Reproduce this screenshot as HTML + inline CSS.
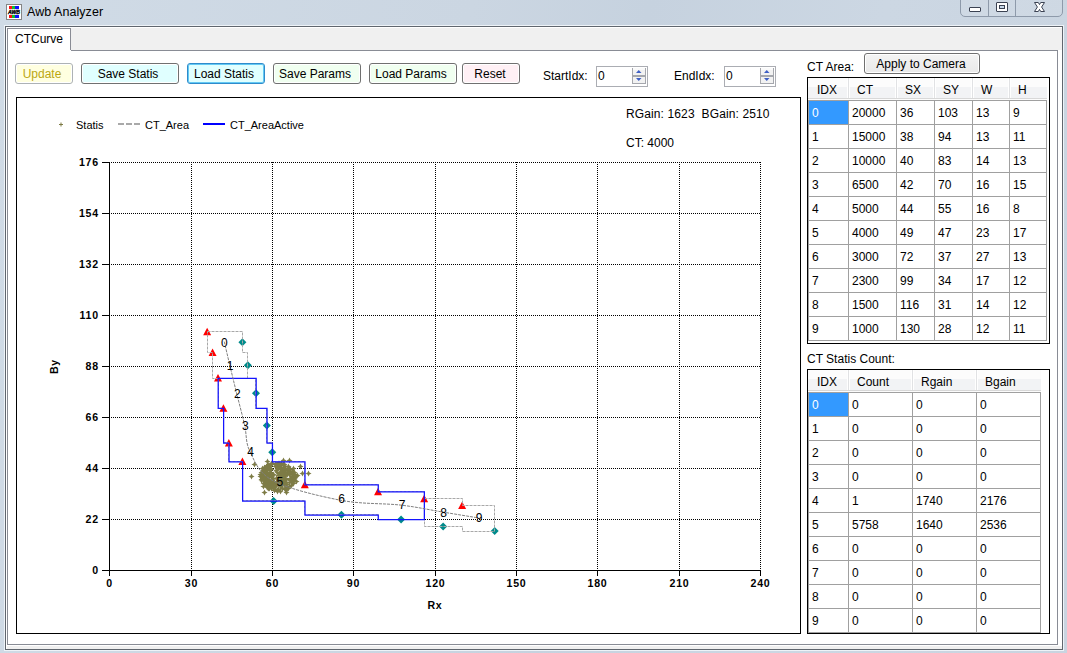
<!DOCTYPE html>
<html><head><meta charset="utf-8">
<style>
*{margin:0;padding:0;box-sizing:border-box}
html,body{width:1067px;height:653px;overflow:hidden}
body{position:relative;background:linear-gradient(100deg,#d0dbe6 0%,#cbd6e2 40%,#c6d2df 55%,#ccd7e3 75%,#c9d4e0 100%);font-family:"Liberation Sans",sans-serif;font-size:12px;color:#000}
.a{position:absolute}
.t{position:absolute;white-space:pre;line-height:14px}
.btn{position:absolute;height:21px;border:1px solid #707070;border-radius:3px;box-shadow:inset 0 0 0 1px #fff}
.btn span{position:absolute;left:0;right:0;top:3px;text-align:center;white-space:pre;line-height:14px}
.spin{position:absolute;width:52px;height:21px;border:1px solid #abadb3;background:#fff}
.grid{position:absolute;border:1px solid #000;background:#fff;overflow:hidden}
</style></head><body>
<!-- title -->
<svg class="a" style="left:6px;top:4px" width="16" height="16" viewBox="0 0 16 16" shape-rendering="crispEdges"><rect x="0.5" y="0.5" width="15" height="15" fill="#fff" stroke="#858585"/><rect x="3" y="2" width="3" height="3" fill="#ff1010"/><rect x="6" y="2" width="3" height="3" fill="#10c030"/><rect x="9" y="2" width="4" height="3" fill="#1010ff"/><rect x="3" y="11" width="3" height="3" fill="#ff1010"/><rect x="6" y="11" width="3" height="3" fill="#10c030"/><rect x="9" y="11" width="4" height="3" fill="#1010ff"/><text x="8" y="10" text-anchor="middle" font-family="Liberation Sans" font-weight="bold" font-style="italic" font-size="5.5" fill="#000" stroke="#000" stroke-width="0.35" shape-rendering="auto" textLength="12" lengthAdjust="spacingAndGlyphs">AWB</text></svg>
<div class="t" style="left:27px;top:5px;font-size:12.5px;line-height:15px;color:#000;letter-spacing:0.05px">Awb Analyzer</div>
<!-- caption buttons -->
<div class="a" style="left:960px;top:-3px;width:103px;height:20px;border:1px solid #8e9aaa;border-radius:0 0 5px 5px;background:rgba(255,255,255,0.08)"></div>
<div class="a" style="left:988px;top:0;width:1px;height:16px;background:#8e9aaa"></div>
<div class="a" style="left:1015px;top:0;width:1px;height:16px;background:#8e9aaa"></div>
<div class="a" style="left:969px;top:7px;width:12px;height:5px;border:1px solid #3b4252;background:#fff;border-radius:1px"></div>
<div class="a" style="left:996px;top:2px;width:12px;height:10px;border:1px solid #3b4252;background:#fff;border-radius:1px"><div class="a" style="left:2px;top:2px;width:6px;height:4px;border:1px solid #3b4252;background:#c9d9ea"></div></div>
<svg class="a" style="left:1032px;top:0" width="15" height="14" viewBox="0 0 15 14"><path d="M2.5 2.5H6.3L7.5 4.6L8.7 2.5H12.5L9.6 7L12.5 11.5H8.7L7.5 9.4L6.3 11.5H2.5L5.4 7Z" fill="#fff" stroke="#3b4252" stroke-width="1" stroke-linejoin="round"/></svg>

<!-- client area -->
<div class="a" style="left:4px;top:25px;width:1060px;height:626px;border:1px solid #eef3f8"></div>
<div class="a" style="left:5px;top:26px;width:1058px;height:624px;border:1px solid #60666e;background:#f0f0f0"></div>
<div class="a" style="left:6px;top:27px;width:1056px;height:622px;border:1px solid #fff;border-right:none;border-bottom:none"></div>
<!-- tab header -->
<div class="a" style="left:7px;top:28px;width:64px;height:24px;border:1px solid #898c95;border-bottom:none;background:#fff"></div>
<div class="t" style="left:15px;top:32px">CTCurve</div>
<!-- tab page -->
<div class="a" style="left:7px;top:50px;width:1051px;height:595px;border:1px solid #898c95;border-top:none;background:#fff"></div>
<div class="a" style="left:71px;top:50px;width:987px;height:1px;background:#898c95"></div>
<div class="a" style="left:1058px;top:50px;width:4px;height:596px;background:#fff"></div>
<div class="a" style="left:7px;top:645px;width:1051px;height:1px;background:#fff"></div>

<!-- buttons -->
<div class="btn" style="left:15px;top:63px;width:58px;border-color:#adb2b5;background:#ffffe0"><span style="color:#bba712;left:-2px;right:2px">Update</span></div>
<div class="btn" style="left:81px;top:63px;width:98px;background:#e0ffff"><span style="left:-2px;right:2px">Save Statis</span></div>
<div class="btn" style="left:187px;top:63px;width:78px;border-color:#2f8bcb;box-shadow:inset 0 0 0 1px #62c9f4;background:#e0ffff"><span style="left:-2px;right:2px">Load Statis</span></div>
<div class="btn" style="left:273px;top:63px;width:88px;background:#f0fff0"><span style="left:-2px;right:2px">Save Params</span></div>
<div class="btn" style="left:369px;top:63px;width:88px;background:#f0fff0"><span style="left:-2px;right:2px">Load Params</span></div>
<div class="btn" style="left:462px;top:63px;width:58px;background:#fff0f5"><span style="left:-1px;right:1px">Reset</span></div>

<div class="t" style="left:543px;top:69px">StartIdx:</div>
<div class="spin" style="left:596px;top:66px"></div>
<div class="t" style="left:598px;top:69px">0</div>
<svg class="a" style="left:632px;top:68px" width="14" height="16" viewBox="0 0 14 16"><rect x="1" y="0" width="12" height="7" fill="#f2f2f2"/><rect x="1" y="9" width="12" height="7" fill="#f2f2f2"/><rect x="1" y="0" width="12" height="2" fill="#fafafa"/><path d="M0.5 0V16M13.5 0V16M0 15.5H14M0 7.5H14M0 8.5H14" stroke="#a5a7ad" stroke-width="1" shape-rendering="crispEdges"/><path d="M4 5H9.5L6.75 2Z" fill="#3e5fc4"/><path d="M4 10H9.5L6.75 13Z" fill="#3e5fc4"/></svg>
<div class="t" style="left:674px;top:69px">EndIdx:</div>
<div class="spin" style="left:724px;top:66px"></div>
<div class="t" style="left:726px;top:69px">0</div>
<svg class="a" style="left:760px;top:68px" width="14" height="16" viewBox="0 0 14 16"><rect x="1" y="0" width="12" height="7" fill="#f2f2f2"/><rect x="1" y="9" width="12" height="7" fill="#f2f2f2"/><rect x="1" y="0" width="12" height="2" fill="#fafafa"/><path d="M0.5 0V16M13.5 0V16M0 15.5H14M0 7.5H14M0 8.5H14" stroke="#a5a7ad" stroke-width="1" shape-rendering="crispEdges"/><path d="M4 5H9.5L6.75 2Z" fill="#3e5fc4"/><path d="M4 10H9.5L6.75 13Z" fill="#3e5fc4"/></svg>

<div class="t" style="left:807px;top:60px">CT Area:</div>
<div class="btn" style="left:864px;top:53px;width:116px;height:21px;border-color:#707070;background:linear-gradient(#f4f4f4 0%,#eeeeee 50%,#e9e9e9 100%)"><span style="top:3px;left:-2px">Apply to Camera</span></div>
<div class="t" style="left:807px;top:352px">CT Statis Count:</div>

<!-- chart -->
<svg class="a" style="left:0;top:0" width="1067" height="653" viewBox="0 0 1067 653">
<rect x="16.5" y="97.5" width="784" height="536" fill="#fff" stroke="#000" stroke-width="1"/>
<path d="M111 162.5H761M111 213.5H761M111 264.5H761M111 315.5H761M111 366.5H761M111 417.5H761M111 468.5H761M111 519.5H761" stroke="#000" stroke-width="1" stroke-dasharray="1 1" fill="none" shape-rendering="crispEdges"/>
<path d="M191.5 162V570M272.5 162V570M353.5 162V570M435.5 162V570M516.5 162V570M597.5 162V570M679.5 162V570M760.5 162V570" stroke="#000" stroke-width="1" stroke-dasharray="1 1" fill="none" shape-rendering="crispEdges"/>
<path d="M109.5 162V575.5M102 570.5H760.5M102 162.5H109M102 213.5H109M102 264.5H109M102 315.5H109M102 366.5H109M102 417.5H109M102 468.5H109M102 519.5H109M191.5 570V575.5M272.5 570V575.5M353.5 570V575.5M435.5 570V575.5M516.5 570V575.5M597.5 570V575.5M679.5 570V575.5M760.5 570V575.5" stroke="#000" stroke-width="1" fill="none" shape-rendering="crispEdges"/>
<g font-family="Liberation Sans" font-weight="bold" font-size="10.6" letter-spacing="0.8" fill="#000"><text x="99" y="166" text-anchor="end">176</text><text x="99" y="217" text-anchor="end">154</text><text x="99" y="268" text-anchor="end">132</text><text x="99" y="319" text-anchor="end">110</text><text x="99" y="370" text-anchor="end">88</text><text x="99" y="421" text-anchor="end">66</text><text x="99" y="472" text-anchor="end">44</text><text x="99" y="523" text-anchor="end">22</text><text x="99" y="574" text-anchor="end">0</text><text x="109.5" y="587" text-anchor="middle">0</text><text x="191.5" y="587" text-anchor="middle">30</text><text x="272.5" y="587" text-anchor="middle">60</text><text x="353.5" y="587" text-anchor="middle">90</text><text x="435.5" y="587" text-anchor="middle">120</text><text x="516.5" y="587" text-anchor="middle">150</text><text x="597.5" y="587" text-anchor="middle">180</text><text x="679.5" y="587" text-anchor="middle">210</text><text x="760.5" y="587" text-anchor="middle">240</text><text x="435" y="609" text-anchor="middle">Rx</text><text transform="translate(58 366.5) rotate(-90)" text-anchor="middle">By</text></g>
<path d="M59 124.5H63M61 122.5V126.5" stroke="#7d7b45" stroke-width="1"/>
<path d="M118 124H140" stroke="#a9a9a9" stroke-width="2" stroke-dasharray="6 2"/>
<path d="M203 124H225" stroke="#0000ff" stroke-width="2"/>
<g font-family="Liberation Sans" font-size="11" fill="#000"><text x="76" y="129">Statis</text><text x="145" y="129">CT_Area</text><text x="230" y="129">CT_AreaActive</text></g>
<g font-family="Liberation Sans" font-size="12" fill="#000"><text x="626" y="118" style="white-space:pre" letter-spacing="0.12">RGain: 1623  BGain: 2510</text><text x="626" y="147">CT: 4000</text></g>
<path d="M273.5 478.5L275.5 477.5L276.5 475.5L277.5 477.5L279.5 478.5L277.5 479.5L276.5 481.5L275.5 479.5ZM289.5 476.5L291.5 475.5L292.5 473.5L293.5 475.5L295.5 476.5L293.5 477.5L292.5 479.5L291.5 477.5ZM275.5 479.5L277.5 478.5L278.5 476.5L279.5 478.5L281.5 479.5L279.5 480.5L278.5 482.5L277.5 480.5ZM263.5 477.5L265.5 476.5L266.5 474.5L267.5 476.5L269.5 477.5L267.5 478.5L266.5 480.5L265.5 478.5ZM279.5 484.5L281.5 483.5L282.5 481.5L283.5 483.5L285.5 484.5L283.5 485.5L282.5 487.5L281.5 485.5ZM260.5 471.5L262.5 470.5L263.5 468.5L264.5 470.5L266.5 471.5L264.5 472.5L263.5 474.5L262.5 472.5ZM281.5 464.5L283.5 463.5L284.5 461.5L285.5 463.5L287.5 464.5L285.5 465.5L284.5 467.5L283.5 465.5ZM280.5 480.5L282.5 479.5L283.5 477.5L284.5 479.5L286.5 480.5L284.5 481.5L283.5 483.5L282.5 481.5ZM275.5 465.5L277.5 464.5L278.5 462.5L279.5 464.5L281.5 465.5L279.5 466.5L278.5 468.5L277.5 466.5ZM264.5 470.5L266.5 469.5L267.5 467.5L268.5 469.5L270.5 470.5L268.5 471.5L267.5 473.5L266.5 471.5ZM258.5 476.5L260.5 475.5L261.5 473.5L262.5 475.5L264.5 476.5L262.5 477.5L261.5 479.5L260.5 477.5ZM272.5 486.5L274.5 485.5L275.5 483.5L276.5 485.5L278.5 486.5L276.5 487.5L275.5 489.5L274.5 487.5ZM275.5 480.5L277.5 479.5L278.5 477.5L279.5 479.5L281.5 480.5L279.5 481.5L278.5 483.5L277.5 481.5ZM274.5 481.5L276.5 480.5L277.5 478.5L278.5 480.5L280.5 481.5L278.5 482.5L277.5 484.5L276.5 482.5ZM273.5 471.5L275.5 470.5L276.5 468.5L277.5 470.5L279.5 471.5L277.5 472.5L276.5 474.5L275.5 472.5ZM286.5 482.5L288.5 481.5L289.5 479.5L290.5 481.5L292.5 482.5L290.5 483.5L289.5 485.5L288.5 483.5ZM268.5 469.5L270.5 468.5L271.5 466.5L272.5 468.5L274.5 469.5L272.5 470.5L271.5 472.5L270.5 470.5ZM267.5 465.5L269.5 464.5L270.5 462.5L271.5 464.5L273.5 465.5L271.5 466.5L270.5 468.5L269.5 466.5ZM284.5 474.5L286.5 473.5L287.5 471.5L288.5 473.5L290.5 474.5L288.5 475.5L287.5 477.5L286.5 475.5ZM287.5 473.5L289.5 472.5L290.5 470.5L291.5 472.5L293.5 473.5L291.5 474.5L290.5 476.5L289.5 474.5ZM291.5 474.5L293.5 473.5L294.5 471.5L295.5 473.5L297.5 474.5L295.5 475.5L294.5 477.5L293.5 475.5ZM260.5 480.5L262.5 479.5L263.5 477.5L264.5 479.5L266.5 480.5L264.5 481.5L263.5 483.5L262.5 481.5ZM284.5 470.5L286.5 469.5L287.5 467.5L288.5 469.5L290.5 470.5L288.5 471.5L287.5 473.5L286.5 471.5ZM260.5 472.5L262.5 471.5L263.5 469.5L264.5 471.5L266.5 472.5L264.5 473.5L263.5 475.5L262.5 473.5ZM261.5 470.5L263.5 469.5L264.5 467.5L265.5 469.5L267.5 470.5L265.5 471.5L264.5 473.5L263.5 471.5ZM285.5 468.5L287.5 467.5L288.5 465.5L289.5 467.5L291.5 468.5L289.5 469.5L288.5 471.5L287.5 469.5ZM277.5 475.5L279.5 474.5L280.5 472.5L281.5 474.5L283.5 475.5L281.5 476.5L280.5 478.5L279.5 476.5ZM264.5 483.5L266.5 482.5L267.5 480.5L268.5 482.5L270.5 483.5L268.5 484.5L267.5 486.5L266.5 484.5ZM262.5 480.5L264.5 479.5L265.5 477.5L266.5 479.5L268.5 480.5L266.5 481.5L265.5 483.5L264.5 481.5ZM261.5 474.5L263.5 473.5L264.5 471.5L265.5 473.5L267.5 474.5L265.5 475.5L264.5 477.5L263.5 475.5ZM268.5 487.5L270.5 486.5L271.5 484.5L272.5 486.5L274.5 487.5L272.5 488.5L271.5 490.5L270.5 488.5ZM264.5 474.5L266.5 473.5L267.5 471.5L268.5 473.5L270.5 474.5L268.5 475.5L267.5 477.5L266.5 475.5ZM287.5 480.5L289.5 479.5L290.5 477.5L291.5 479.5L293.5 480.5L291.5 481.5L290.5 483.5L289.5 481.5ZM284.5 472.5L286.5 471.5L287.5 469.5L288.5 471.5L290.5 472.5L288.5 473.5L287.5 475.5L286.5 473.5ZM260.5 479.5L262.5 478.5L263.5 476.5L264.5 478.5L266.5 479.5L264.5 480.5L263.5 482.5L262.5 480.5ZM266.5 479.5L268.5 478.5L269.5 476.5L270.5 478.5L272.5 479.5L270.5 480.5L269.5 482.5L268.5 480.5ZM270.5 475.5L272.5 474.5L273.5 472.5L274.5 474.5L276.5 475.5L274.5 476.5L273.5 478.5L272.5 476.5ZM291.5 476.5L293.5 475.5L294.5 473.5L295.5 475.5L297.5 476.5L295.5 477.5L294.5 479.5L293.5 477.5ZM277.5 486.5L279.5 485.5L280.5 483.5L281.5 485.5L283.5 486.5L281.5 487.5L280.5 489.5L279.5 487.5ZM263.5 467.5L265.5 466.5L266.5 464.5L267.5 466.5L269.5 467.5L267.5 468.5L266.5 470.5L265.5 468.5ZM266.5 468.5L268.5 467.5L269.5 465.5L270.5 467.5L272.5 468.5L270.5 469.5L269.5 471.5L268.5 469.5ZM288.5 479.5L290.5 478.5L291.5 476.5L292.5 478.5L294.5 479.5L292.5 480.5L291.5 482.5L290.5 480.5ZM272.5 466.5L274.5 465.5L275.5 463.5L276.5 465.5L278.5 466.5L276.5 467.5L275.5 469.5L274.5 467.5ZM265.5 482.5L267.5 481.5L268.5 479.5L269.5 481.5L271.5 482.5L269.5 483.5L268.5 485.5L267.5 483.5ZM266.5 485.5L268.5 484.5L269.5 482.5L270.5 484.5L272.5 485.5L270.5 486.5L269.5 488.5L268.5 486.5ZM278.5 471.5L280.5 470.5L281.5 468.5L282.5 470.5L284.5 471.5L282.5 472.5L281.5 474.5L280.5 472.5ZM263.5 482.5L265.5 481.5L266.5 479.5L267.5 481.5L269.5 482.5L267.5 483.5L266.5 485.5L265.5 483.5ZM279.5 471.5L281.5 470.5L282.5 468.5L283.5 470.5L285.5 471.5L283.5 472.5L282.5 474.5L281.5 472.5ZM273.5 465.5L275.5 464.5L276.5 462.5L277.5 464.5L279.5 465.5L277.5 466.5L276.5 468.5L275.5 466.5ZM263.5 473.5L265.5 472.5L266.5 470.5L267.5 472.5L269.5 473.5L267.5 474.5L266.5 476.5L265.5 474.5ZM277.5 467.5L279.5 466.5L280.5 464.5L281.5 466.5L283.5 467.5L281.5 468.5L280.5 470.5L279.5 468.5ZM270.5 487.5L272.5 486.5L273.5 484.5L274.5 486.5L276.5 487.5L274.5 488.5L273.5 490.5L272.5 488.5ZM281.5 479.5L283.5 478.5L284.5 476.5L285.5 478.5L287.5 479.5L285.5 480.5L284.5 482.5L283.5 480.5ZM258.5 480.5L260.5 479.5L261.5 477.5L262.5 479.5L264.5 480.5L262.5 481.5L261.5 483.5L260.5 481.5ZM274.5 483.5L276.5 482.5L277.5 480.5L278.5 482.5L280.5 483.5L278.5 484.5L277.5 486.5L276.5 484.5ZM260.5 478.5L262.5 477.5L263.5 475.5L264.5 477.5L266.5 478.5L264.5 479.5L263.5 481.5L262.5 479.5ZM283.5 487.5L285.5 486.5L286.5 484.5L287.5 486.5L289.5 487.5L287.5 488.5L286.5 490.5L285.5 488.5ZM283.5 482.5L285.5 481.5L286.5 479.5L287.5 481.5L289.5 482.5L287.5 483.5L286.5 485.5L285.5 483.5ZM269.5 481.5L271.5 480.5L272.5 478.5L273.5 480.5L275.5 481.5L273.5 482.5L272.5 484.5L271.5 482.5ZM272.5 484.5L274.5 483.5L275.5 481.5L276.5 483.5L278.5 484.5L276.5 485.5L275.5 487.5L274.5 485.5ZM287.5 478.5L289.5 477.5L290.5 475.5L291.5 477.5L293.5 478.5L291.5 479.5L290.5 481.5L289.5 479.5ZM279.5 473.5L281.5 472.5L282.5 470.5L283.5 472.5L285.5 473.5L283.5 474.5L282.5 476.5L281.5 474.5ZM277.5 479.5L279.5 478.5L280.5 476.5L281.5 478.5L283.5 479.5L281.5 480.5L280.5 482.5L279.5 480.5ZM282.5 473.5L284.5 472.5L285.5 470.5L286.5 472.5L288.5 473.5L286.5 474.5L285.5 476.5L284.5 474.5ZM283.5 479.5L285.5 478.5L286.5 476.5L287.5 478.5L289.5 479.5L287.5 480.5L286.5 482.5L285.5 480.5ZM260.5 483.5L262.5 482.5L263.5 480.5L264.5 482.5L266.5 483.5L264.5 484.5L263.5 486.5L262.5 484.5ZM258.5 479.5L260.5 478.5L261.5 476.5L262.5 478.5L264.5 479.5L262.5 480.5L261.5 482.5L260.5 480.5ZM274.5 469.5L276.5 468.5L277.5 466.5L278.5 468.5L280.5 469.5L278.5 470.5L277.5 472.5L276.5 470.5ZM281.5 476.5L283.5 475.5L284.5 473.5L285.5 475.5L287.5 476.5L285.5 477.5L284.5 479.5L283.5 477.5ZM279.5 488.5L281.5 487.5L282.5 485.5L283.5 487.5L285.5 488.5L283.5 489.5L282.5 491.5L281.5 489.5ZM268.5 481.5L270.5 480.5L271.5 478.5L272.5 480.5L274.5 481.5L272.5 482.5L271.5 484.5L270.5 482.5ZM264.5 468.5L266.5 467.5L267.5 465.5L268.5 467.5L270.5 468.5L268.5 469.5L267.5 471.5L266.5 469.5ZM289.5 481.5L291.5 480.5L292.5 478.5L293.5 480.5L295.5 481.5L293.5 482.5L292.5 484.5L291.5 482.5ZM272.5 487.5L274.5 486.5L275.5 484.5L276.5 486.5L278.5 487.5L276.5 488.5L275.5 490.5L274.5 488.5ZM264.5 475.5L266.5 474.5L267.5 472.5L268.5 474.5L270.5 475.5L268.5 476.5L267.5 478.5L266.5 476.5ZM288.5 473.5L290.5 472.5L291.5 470.5L292.5 472.5L294.5 473.5L292.5 474.5L291.5 476.5L290.5 474.5ZM277.5 472.5L279.5 471.5L280.5 469.5L281.5 471.5L283.5 472.5L281.5 473.5L280.5 475.5L279.5 473.5ZM262.5 476.5L264.5 475.5L265.5 473.5L266.5 475.5L268.5 476.5L266.5 477.5L265.5 479.5L264.5 477.5ZM286.5 486.5L288.5 485.5L289.5 483.5L290.5 485.5L292.5 486.5L290.5 487.5L289.5 489.5L288.5 487.5ZM282.5 489.5L284.5 488.5L285.5 486.5L286.5 488.5L288.5 489.5L286.5 490.5L285.5 492.5L284.5 490.5ZM267.5 468.5L269.5 467.5L270.5 465.5L271.5 467.5L273.5 468.5L271.5 469.5L270.5 471.5L269.5 469.5ZM273.5 470.5L275.5 469.5L276.5 467.5L277.5 469.5L279.5 470.5L277.5 471.5L276.5 473.5L275.5 471.5ZM279.5 476.5L281.5 475.5L282.5 473.5L283.5 475.5L285.5 476.5L283.5 477.5L282.5 479.5L281.5 477.5ZM268.5 486.5L270.5 485.5L271.5 483.5L272.5 485.5L274.5 486.5L272.5 487.5L271.5 489.5L270.5 487.5ZM291.5 475.5L293.5 474.5L294.5 472.5L295.5 474.5L297.5 475.5L295.5 476.5L294.5 478.5L293.5 476.5ZM282.5 478.5L284.5 477.5L285.5 475.5L286.5 477.5L288.5 478.5L286.5 479.5L285.5 481.5L284.5 479.5ZM268.5 484.5L270.5 483.5L271.5 481.5L272.5 483.5L274.5 484.5L272.5 485.5L271.5 487.5L270.5 485.5ZM273.5 464.5L275.5 463.5L276.5 461.5L277.5 463.5L279.5 464.5L277.5 465.5L276.5 467.5L275.5 465.5ZM286.5 469.5L288.5 468.5L289.5 466.5L290.5 468.5L292.5 469.5L290.5 470.5L289.5 472.5L288.5 470.5ZM279.5 475.5L281.5 474.5L282.5 472.5L283.5 474.5L285.5 475.5L283.5 476.5L282.5 478.5L281.5 476.5ZM279.5 481.5L281.5 480.5L282.5 478.5L283.5 480.5L285.5 481.5L283.5 482.5L282.5 484.5L281.5 482.5ZM281.5 468.5L283.5 467.5L284.5 465.5L285.5 467.5L287.5 468.5L285.5 469.5L284.5 471.5L283.5 469.5ZM274.5 468.5L276.5 467.5L277.5 465.5L278.5 467.5L280.5 468.5L278.5 469.5L277.5 471.5L276.5 469.5ZM257.5 476.5L259.5 475.5L260.5 473.5L261.5 475.5L263.5 476.5L261.5 477.5L260.5 479.5L259.5 477.5ZM282.5 468.5L284.5 467.5L285.5 465.5L286.5 467.5L288.5 468.5L286.5 469.5L285.5 471.5L284.5 469.5ZM267.5 472.5L269.5 471.5L270.5 469.5L271.5 471.5L273.5 472.5L271.5 473.5L270.5 475.5L269.5 473.5ZM281.5 477.5L283.5 476.5L284.5 474.5L285.5 476.5L287.5 477.5L285.5 478.5L284.5 480.5L283.5 478.5ZM279.5 483.5L281.5 482.5L282.5 480.5L283.5 482.5L285.5 483.5L283.5 484.5L282.5 486.5L281.5 484.5ZM271.5 484.5L273.5 483.5L274.5 481.5L275.5 483.5L277.5 484.5L275.5 485.5L274.5 487.5L273.5 485.5ZM290.5 483.5L292.5 482.5L293.5 480.5L294.5 482.5L296.5 483.5L294.5 484.5L293.5 486.5L292.5 484.5ZM262.5 475.5L264.5 474.5L265.5 472.5L266.5 474.5L268.5 475.5L266.5 476.5L265.5 478.5L264.5 476.5ZM270.5 478.5L272.5 477.5L273.5 475.5L274.5 477.5L276.5 478.5L274.5 479.5L273.5 481.5L272.5 479.5ZM288.5 485.5L290.5 484.5L291.5 482.5L292.5 484.5L294.5 485.5L292.5 486.5L291.5 488.5L290.5 486.5ZM290.5 476.5L292.5 475.5L293.5 473.5L294.5 475.5L296.5 476.5L294.5 477.5L293.5 479.5L292.5 477.5ZM280.5 469.5L282.5 468.5L283.5 466.5L284.5 468.5L286.5 469.5L284.5 470.5L283.5 472.5L282.5 470.5ZM282.5 485.5L284.5 484.5L285.5 482.5L286.5 484.5L288.5 485.5L286.5 486.5L285.5 488.5L284.5 486.5ZM279.5 482.5L281.5 481.5L282.5 479.5L283.5 481.5L285.5 482.5L283.5 483.5L282.5 485.5L281.5 483.5ZM264.5 487.5L266.5 486.5L267.5 484.5L268.5 486.5L270.5 487.5L268.5 488.5L267.5 490.5L266.5 488.5ZM276.5 484.5L278.5 483.5L279.5 481.5L280.5 483.5L282.5 484.5L280.5 485.5L279.5 487.5L278.5 485.5ZM268.5 488.5L270.5 487.5L271.5 485.5L272.5 487.5L274.5 488.5L272.5 489.5L271.5 491.5L270.5 489.5ZM287.5 472.5L289.5 471.5L290.5 469.5L291.5 471.5L293.5 472.5L291.5 473.5L290.5 475.5L289.5 473.5ZM260.5 475.5L262.5 474.5L263.5 472.5L264.5 474.5L266.5 475.5L264.5 476.5L263.5 478.5L262.5 476.5ZM274.5 464.5L276.5 463.5L277.5 461.5L278.5 463.5L280.5 464.5L278.5 465.5L277.5 467.5L276.5 465.5ZM269.5 484.5L271.5 483.5L272.5 481.5L273.5 483.5L275.5 484.5L273.5 485.5L272.5 487.5L271.5 485.5ZM275.5 483.5L277.5 482.5L278.5 480.5L279.5 482.5L281.5 483.5L279.5 484.5L278.5 486.5L277.5 484.5ZM265.5 477.5L267.5 476.5L268.5 474.5L269.5 476.5L271.5 477.5L269.5 478.5L268.5 480.5L267.5 478.5ZM267.5 483.5L269.5 482.5L270.5 480.5L271.5 482.5L273.5 483.5L271.5 484.5L270.5 486.5L269.5 484.5ZM279.5 477.5L281.5 476.5L282.5 474.5L283.5 476.5L285.5 477.5L283.5 478.5L282.5 480.5L281.5 478.5ZM268.5 473.5L270.5 472.5L271.5 470.5L272.5 472.5L274.5 473.5L272.5 474.5L271.5 476.5L270.5 474.5ZM264.5 486.5L266.5 485.5L267.5 483.5L268.5 485.5L270.5 486.5L268.5 487.5L267.5 489.5L266.5 487.5ZM291.5 477.5L293.5 476.5L294.5 474.5L295.5 476.5L297.5 477.5L295.5 478.5L294.5 480.5L293.5 478.5ZM277.5 468.5L279.5 467.5L280.5 465.5L281.5 467.5L283.5 468.5L281.5 469.5L280.5 471.5L279.5 469.5ZM276.5 477.5L278.5 476.5L279.5 474.5L280.5 476.5L282.5 477.5L280.5 478.5L279.5 480.5L278.5 478.5ZM278.5 464.5L280.5 463.5L281.5 461.5L282.5 463.5L284.5 464.5L282.5 465.5L281.5 467.5L280.5 465.5ZM271.5 485.5L273.5 484.5L274.5 482.5L275.5 484.5L277.5 485.5L275.5 486.5L274.5 488.5L273.5 486.5ZM277.5 476.5L279.5 475.5L280.5 473.5L281.5 475.5L283.5 476.5L281.5 477.5L280.5 479.5L279.5 477.5ZM281.5 465.5L283.5 464.5L284.5 462.5L285.5 464.5L287.5 465.5L285.5 466.5L284.5 468.5L283.5 466.5ZM276.5 474.5L278.5 473.5L279.5 471.5L280.5 473.5L282.5 474.5L280.5 475.5L279.5 477.5L278.5 475.5ZM266.5 476.5L268.5 475.5L269.5 473.5L270.5 475.5L272.5 476.5L270.5 477.5L269.5 479.5L268.5 477.5ZM261.5 475.5L263.5 474.5L264.5 472.5L265.5 474.5L267.5 475.5L265.5 476.5L264.5 478.5L263.5 476.5ZM274.5 472.5L276.5 471.5L277.5 469.5L278.5 471.5L280.5 472.5L278.5 473.5L277.5 475.5L276.5 473.5ZM264.5 480.5L266.5 479.5L267.5 477.5L268.5 479.5L270.5 480.5L268.5 481.5L267.5 483.5L266.5 481.5ZM264.5 469.5L266.5 468.5L267.5 466.5L268.5 468.5L270.5 469.5L268.5 470.5L267.5 472.5L266.5 470.5ZM281.5 472.5L283.5 471.5L284.5 469.5L285.5 471.5L287.5 472.5L285.5 473.5L284.5 475.5L283.5 473.5ZM269.5 480.5L271.5 479.5L272.5 477.5L273.5 479.5L275.5 480.5L273.5 481.5L272.5 483.5L271.5 481.5ZM261.5 483.5L263.5 482.5L264.5 480.5L265.5 482.5L267.5 483.5L265.5 484.5L264.5 486.5L263.5 484.5ZM261.5 477.5L263.5 476.5L264.5 474.5L265.5 476.5L267.5 477.5L265.5 478.5L264.5 480.5L263.5 478.5ZM276.5 475.5L278.5 474.5L279.5 472.5L280.5 474.5L282.5 475.5L280.5 476.5L279.5 478.5L278.5 476.5ZM270.5 474.5L272.5 473.5L273.5 471.5L274.5 473.5L276.5 474.5L274.5 475.5L273.5 477.5L272.5 475.5ZM276.5 467.5L278.5 466.5L279.5 464.5L280.5 466.5L282.5 467.5L280.5 468.5L279.5 470.5L278.5 468.5ZM287.5 469.5L289.5 468.5L290.5 466.5L291.5 468.5L293.5 469.5L291.5 470.5L290.5 472.5L289.5 470.5ZM283.5 485.5L285.5 484.5L286.5 482.5L287.5 484.5L289.5 485.5L287.5 486.5L286.5 488.5L285.5 486.5ZM289.5 472.5L291.5 471.5L292.5 469.5L293.5 471.5L295.5 472.5L293.5 473.5L292.5 475.5L291.5 473.5ZM265.5 483.5L267.5 482.5L268.5 480.5L269.5 482.5L271.5 483.5L269.5 484.5L268.5 486.5L267.5 484.5ZM266.5 466.5L268.5 465.5L269.5 463.5L270.5 465.5L272.5 466.5L270.5 467.5L269.5 469.5L268.5 467.5ZM286.5 474.5L288.5 473.5L289.5 471.5L290.5 473.5L292.5 474.5L290.5 475.5L289.5 477.5L288.5 475.5ZM285.5 466.5L287.5 465.5L288.5 463.5L289.5 465.5L291.5 466.5L289.5 467.5L288.5 469.5L287.5 467.5ZM271.5 482.5L273.5 481.5L274.5 479.5L275.5 481.5L277.5 482.5L275.5 483.5L274.5 485.5L273.5 483.5ZM281.5 488.5L283.5 487.5L284.5 485.5L285.5 487.5L287.5 488.5L285.5 489.5L284.5 491.5L283.5 489.5ZM275.5 482.5L277.5 481.5L278.5 479.5L279.5 481.5L281.5 482.5L279.5 483.5L278.5 485.5L277.5 483.5ZM263.5 469.5L265.5 468.5L266.5 466.5L267.5 468.5L269.5 469.5L267.5 470.5L266.5 472.5L265.5 470.5ZM273.5 484.5L275.5 483.5L276.5 481.5L277.5 483.5L279.5 484.5L277.5 485.5L276.5 487.5L275.5 485.5ZM268.5 476.5L270.5 475.5L271.5 473.5L272.5 475.5L274.5 476.5L272.5 477.5L271.5 479.5L270.5 477.5ZM275.5 475.5L277.5 474.5L278.5 472.5L279.5 474.5L281.5 475.5L279.5 476.5L278.5 478.5L277.5 476.5ZM278.5 463.5L280.5 462.5L281.5 460.5L282.5 462.5L284.5 463.5L282.5 464.5L281.5 466.5L280.5 464.5ZM282.5 486.5L284.5 485.5L285.5 483.5L286.5 485.5L288.5 486.5L286.5 487.5L285.5 489.5L284.5 487.5ZM263.5 475.5L265.5 474.5L266.5 472.5L267.5 474.5L269.5 475.5L267.5 476.5L266.5 478.5L265.5 476.5ZM283.5 474.5L285.5 473.5L286.5 471.5L287.5 473.5L289.5 474.5L287.5 475.5L286.5 477.5L285.5 475.5ZM264.5 467.5L266.5 466.5L267.5 464.5L268.5 466.5L270.5 467.5L268.5 468.5L267.5 470.5L266.5 468.5ZM275.5 463.5L277.5 462.5L278.5 460.5L279.5 462.5L281.5 463.5L279.5 464.5L278.5 466.5L277.5 464.5ZM279.5 474.5L281.5 473.5L282.5 471.5L283.5 473.5L285.5 474.5L283.5 475.5L282.5 477.5L281.5 475.5ZM278.5 477.5L280.5 476.5L281.5 474.5L282.5 476.5L284.5 477.5L282.5 478.5L281.5 480.5L280.5 478.5ZM266.5 488.5L268.5 487.5L269.5 485.5L270.5 487.5L272.5 488.5L270.5 489.5L269.5 491.5L268.5 489.5ZM283.5 484.5L285.5 483.5L286.5 481.5L287.5 483.5L289.5 484.5L287.5 485.5L286.5 487.5L285.5 485.5ZM290.5 468.5L292.5 467.5L293.5 465.5L294.5 467.5L296.5 468.5L294.5 469.5L293.5 471.5L292.5 469.5ZM268.5 463.5L270.5 462.5L271.5 460.5L272.5 462.5L274.5 463.5L272.5 464.5L271.5 466.5L270.5 464.5ZM276.5 463.5L278.5 462.5L279.5 460.5L280.5 462.5L282.5 463.5L280.5 464.5L279.5 466.5L278.5 464.5ZM272.5 464.5L274.5 463.5L275.5 461.5L276.5 463.5L278.5 464.5L276.5 465.5L275.5 467.5L274.5 465.5ZM265.5 488.5L267.5 487.5L268.5 485.5L269.5 487.5L271.5 488.5L269.5 489.5L268.5 491.5L267.5 489.5ZM292.5 477.5L294.5 476.5L295.5 474.5L296.5 476.5L298.5 477.5L296.5 478.5L295.5 480.5L294.5 478.5ZM263.5 466.5L265.5 465.5L266.5 463.5L267.5 465.5L269.5 466.5L267.5 467.5L266.5 469.5L265.5 467.5ZM277.5 491.5L279.5 490.5L280.5 488.5L281.5 490.5L283.5 491.5L281.5 492.5L280.5 494.5L279.5 492.5ZM266.5 465.5L268.5 464.5L269.5 462.5L270.5 464.5L272.5 465.5L270.5 466.5L269.5 468.5L268.5 466.5ZM265.5 465.5L267.5 464.5L268.5 462.5L269.5 464.5L271.5 465.5L269.5 466.5L268.5 468.5L267.5 466.5ZM258.5 474.5L260.5 473.5L261.5 471.5L262.5 473.5L264.5 474.5L262.5 475.5L261.5 477.5L260.5 475.5ZM293.5 476.5L295.5 475.5L296.5 473.5L297.5 475.5L299.5 476.5L297.5 477.5L296.5 479.5L295.5 477.5ZM269.5 463.5L271.5 462.5L272.5 460.5L273.5 462.5L275.5 463.5L273.5 464.5L272.5 466.5L271.5 464.5ZM290.5 475.5L292.5 474.5L293.5 472.5L294.5 474.5L296.5 475.5L294.5 476.5L293.5 478.5L292.5 476.5ZM261.5 467.5L263.5 466.5L264.5 464.5L265.5 466.5L267.5 467.5L265.5 468.5L264.5 470.5L263.5 468.5ZM274.5 490.5L276.5 489.5L277.5 487.5L278.5 489.5L280.5 490.5L278.5 491.5L277.5 493.5L276.5 491.5ZM290.5 480.5L292.5 479.5L293.5 477.5L294.5 479.5L296.5 480.5L294.5 481.5L293.5 483.5L292.5 481.5ZM263.5 485.5L265.5 484.5L266.5 482.5L267.5 484.5L269.5 485.5L267.5 486.5L266.5 488.5L265.5 486.5ZM274.5 491.5L276.5 490.5L277.5 488.5L278.5 490.5L280.5 491.5L278.5 492.5L277.5 494.5L276.5 492.5ZM258.5 472.5L260.5 471.5L261.5 469.5L262.5 471.5L264.5 472.5L262.5 473.5L261.5 475.5L260.5 473.5ZM292.5 474.5L294.5 473.5L295.5 471.5L296.5 473.5L298.5 474.5L296.5 475.5L295.5 477.5L294.5 475.5ZM280.5 465.5L282.5 464.5L283.5 462.5L284.5 464.5L286.5 465.5L284.5 466.5L283.5 468.5L282.5 466.5ZM259.5 468.5L261.5 467.5L262.5 465.5L263.5 467.5L265.5 468.5L263.5 469.5L262.5 471.5L261.5 469.5ZM293.5 481.5L295.5 480.5L296.5 478.5L297.5 480.5L299.5 481.5L297.5 482.5L296.5 484.5L295.5 482.5ZM284.5 488.5L286.5 487.5L287.5 485.5L288.5 487.5L290.5 488.5L288.5 489.5L287.5 491.5L286.5 489.5ZM283.5 488.5L285.5 487.5L286.5 485.5L287.5 487.5L289.5 488.5L287.5 489.5L286.5 491.5L285.5 489.5ZM262.5 469.5L264.5 468.5L265.5 466.5L266.5 468.5L268.5 469.5L266.5 470.5L265.5 472.5L264.5 470.5ZM291.5 472.5L293.5 471.5L294.5 469.5L295.5 471.5L297.5 472.5L295.5 473.5L294.5 475.5L293.5 473.5ZM257.5 474.5L259.5 473.5L260.5 471.5L261.5 473.5L263.5 474.5L261.5 475.5L260.5 477.5L259.5 475.5ZM263.5 486.5L265.5 485.5L266.5 483.5L267.5 485.5L269.5 486.5L267.5 487.5L266.5 489.5L265.5 487.5ZM264.5 465.5L266.5 464.5L267.5 462.5L268.5 464.5L270.5 465.5L268.5 466.5L267.5 468.5L266.5 466.5ZM271.5 490.5L273.5 489.5L274.5 487.5L275.5 489.5L277.5 490.5L275.5 491.5L274.5 493.5L273.5 491.5ZM270.5 488.5L272.5 487.5L273.5 485.5L274.5 487.5L276.5 488.5L274.5 489.5L273.5 491.5L272.5 489.5ZM275.5 489.5L277.5 488.5L278.5 486.5L279.5 488.5L281.5 489.5L279.5 490.5L278.5 492.5L277.5 490.5ZM285.5 488.5L287.5 487.5L288.5 485.5L289.5 487.5L291.5 488.5L289.5 489.5L288.5 491.5L287.5 489.5ZM260.5 486.5L262.5 485.5L263.5 483.5L264.5 485.5L266.5 486.5L264.5 487.5L263.5 489.5L262.5 487.5ZM294.5 475.5L296.5 474.5L297.5 472.5L298.5 474.5L300.5 475.5L298.5 476.5L297.5 478.5L296.5 476.5ZM264.5 461.5L266.5 460.5L267.5 458.5L268.5 460.5L270.5 461.5L268.5 462.5L267.5 464.5L266.5 462.5ZM251.5 464.5L253.5 463.5L254.5 461.5L255.5 463.5L257.5 464.5L255.5 465.5L254.5 467.5L253.5 465.5ZM248.5 476.5L250.5 475.5L251.5 473.5L252.5 475.5L254.5 476.5L252.5 477.5L251.5 479.5L250.5 477.5ZM261.5 492.5L263.5 491.5L264.5 489.5L265.5 491.5L267.5 492.5L265.5 493.5L264.5 495.5L263.5 493.5ZM280.5 460.5L282.5 459.5L283.5 457.5L284.5 459.5L286.5 460.5L284.5 461.5L283.5 463.5L282.5 461.5ZM286.5 460.5L288.5 459.5L289.5 457.5L290.5 459.5L292.5 460.5L290.5 461.5L289.5 463.5L288.5 461.5ZM297.5 466.5L299.5 465.5L300.5 463.5L301.5 465.5L303.5 466.5L301.5 467.5L300.5 469.5L299.5 467.5ZM305.5 473.5L307.5 472.5L308.5 470.5L309.5 472.5L311.5 473.5L309.5 474.5L308.5 476.5L307.5 474.5ZM299.5 473.5L301.5 472.5L302.5 470.5L303.5 472.5L305.5 473.5L303.5 474.5L302.5 476.5L301.5 474.5ZM283.5 492.5L285.5 491.5L286.5 489.5L287.5 491.5L289.5 492.5L287.5 493.5L286.5 495.5L285.5 493.5Z" fill="#7d7b45"/>
<path d="M207.15 327.73L211.15 335.23L203.15 335.23ZM212.57 348.59L216.57 356.09L208.57 356.09ZM218.00 374.09L222.00 381.59L214.00 381.59ZM223.43 404.23L227.43 411.73L219.43 411.73ZM228.85 439.00L232.85 446.50L224.85 446.50ZM242.41 457.55L246.41 465.05L238.41 465.05ZM304.80 480.73L308.80 488.23L300.80 488.23ZM378.04 487.68L382.04 495.18L374.04 495.18ZM424.15 494.64L428.15 502.14L420.15 502.14ZM462.12 501.59L466.12 509.09L458.12 509.09Z" fill="#ff0000"/>
<path d="M242.41 338.16L246.41 342.16L242.41 346.16L238.41 342.16ZM247.84 361.34L251.84 365.34L247.84 369.34L243.84 365.34ZM255.97 389.16L259.98 393.16L255.97 397.16L251.97 393.16ZM266.82 421.61L270.82 425.61L266.82 429.61L262.82 425.61ZM272.25 448.27L276.25 452.27L272.25 456.27L268.25 452.27ZM273.61 496.95L277.61 500.95L273.61 504.95L269.61 500.95ZM341.42 510.86L345.42 514.86L341.42 518.86L337.42 514.86ZM401.09 515.50L405.09 519.50L401.09 523.50L397.09 519.50ZM443.14 522.45L447.14 526.45L443.14 530.45L439.14 526.45ZM494.68 527.09L498.68 531.09L494.68 535.09L490.68 531.09Z" fill="#008b8b"/>
<path d="M207.5 331.5L242.5 331.5L242.5 352.5L247.5 352.5L247.5 378.5L255.5 378.5L255.5 408.5L266.5 408.5L266.5 442.5L272.5 442.5L272.5 461.5L304.5 461.5L304.5 484.5L378.5 484.5L378.5 491.5L424.5 491.5L424.5 498.5L462.5 498.5L462.5 505.5L494.5 505.5L494.5 531.5L462.5 531.5L462.5 526.5L424.5 526.5L424.5 519.5L378.5 519.5L378.5 514.5L304.5 514.5L304.5 500.5L242.5 500.5L242.5 461.5L228.5 461.5L228.5 442.5L223.5 442.5L223.5 408.5L218.5 408.5L218.5 378.5L212.5 378.5L212.5 352.5L207.5 352.5Z" fill="none" stroke="#a8a8a8" stroke-width="1" stroke-dasharray="3 1"/>
<path d="M218.20 378.29L256.18 378.29L256.18 408.43L267.02 408.43L267.02 443.20L272.45 443.20L272.45 461.75L305.00 461.75L305.00 484.93L378.24 484.93L378.24 491.88L424.35 491.88L424.35 519.70L378.24 519.70L378.24 515.06L305.00 515.06L305.00 501.15L242.61 501.15L242.61 461.75L229.05 461.75L229.05 443.20L223.62 443.20L223.62 408.43L218.20 408.43Z" fill="none" stroke="#1414ff" stroke-width="1.25"/>
<path d="M224.28 341.66C225.19 345.52 227.67 356.34 229.71 364.84C231.74 373.34 234.00 382.61 236.49 392.66C238.97 402.70 242.36 415.26 244.62 425.11C246.89 434.97 245.30 442.50 250.05 451.77C254.80 461.05 257.96 472.66 273.11 480.75C288.25 488.84 319.67 496.24 340.92 500.30C362.17 504.35 383.64 503.13 400.59 505.09C417.55 507.05 429.75 509.92 442.64 512.05C455.52 514.17 472.02 516.88 477.90 517.84" fill="none" stroke="#808080" stroke-width="1" stroke-dasharray="3 1"/>
<g font-family="Liberation Sans" font-size="12" fill="#000"><text x="224.3" y="346.6" text-anchor="middle">0</text><text x="230.2" y="369.7" text-anchor="middle">1</text><text x="237.3" y="397.5" text-anchor="middle">2</text><text x="245.3" y="430.1" text-anchor="middle">3</text><text x="250.6" y="455.9" text-anchor="middle">4</text><text x="279.8" y="485.8" text-anchor="middle">5</text><text x="341.6" y="502.9" text-anchor="middle">6</text><text x="402.0" y="508.5" text-anchor="middle">7</text><text x="443.6" y="516.5" text-anchor="middle">8</text><text x="479.0" y="522.1" text-anchor="middle">9</text></g>
</svg>
<!-- grids -->
<div class="a" style="left:807px;top:77px;width:243px;height:267px;border:1px solid #000;background:#fff"></div>
<div class="a" style="left:808px;top:78px;width:239px;height:22px;background:linear-gradient(#fcfcfc 0px,#fcfcfc 9px,#f2f3f5 9px,#f2f3f5 20px,#d8d8d8 20px,#d8d8d8 21px,#fcfcfc 21px)"></div>
<div class="a" style="left:848px;top:78px;width:1px;height:20px;background:#e1e2e4;box-shadow:-1px 0 0 #fff,1px 0 0 #fff"></div>
<div class="a" style="left:896px;top:78px;width:1px;height:20px;background:#e1e2e4;box-shadow:-1px 0 0 #fff,1px 0 0 #fff"></div>
<div class="a" style="left:934px;top:78px;width:1px;height:20px;background:#e1e2e4;box-shadow:-1px 0 0 #fff,1px 0 0 #fff"></div>
<div class="a" style="left:972px;top:78px;width:1px;height:20px;background:#e1e2e4;box-shadow:-1px 0 0 #fff,1px 0 0 #fff"></div>
<div class="a" style="left:1009px;top:78px;width:1px;height:20px;background:#e1e2e4;box-shadow:-1px 0 0 #fff,1px 0 0 #fff"></div>
<div class="t" style="left:817px;top:83px">IDX</div>
<div class="t" style="left:857px;top:83px">CT</div>
<div class="t" style="left:905px;top:83px">SX</div>
<div class="t" style="left:943px;top:83px">SY</div>
<div class="t" style="left:981px;top:83px">W</div>
<div class="t" style="left:1018px;top:83px">H</div>
<div class="a" style="left:808px;top:100px;width:239px;height:1px;background:#a0a0a0"></div>
<div class="a" style="left:808px;top:124px;width:239px;height:1px;background:#a0a0a0"></div>
<div class="a" style="left:808px;top:148px;width:239px;height:1px;background:#a0a0a0"></div>
<div class="a" style="left:808px;top:172px;width:239px;height:1px;background:#a0a0a0"></div>
<div class="a" style="left:808px;top:196px;width:239px;height:1px;background:#a0a0a0"></div>
<div class="a" style="left:808px;top:220px;width:239px;height:1px;background:#a0a0a0"></div>
<div class="a" style="left:808px;top:244px;width:239px;height:1px;background:#a0a0a0"></div>
<div class="a" style="left:808px;top:268px;width:239px;height:1px;background:#a0a0a0"></div>
<div class="a" style="left:808px;top:292px;width:239px;height:1px;background:#a0a0a0"></div>
<div class="a" style="left:808px;top:316px;width:239px;height:1px;background:#a0a0a0"></div>
<div class="a" style="left:808px;top:340px;width:239px;height:1px;background:#a0a0a0"></div>
<div class="a" style="left:808px;top:100px;width:1px;height:241px;background:#a0a0a0"></div>
<div class="a" style="left:848px;top:100px;width:1px;height:241px;background:#a0a0a0"></div>
<div class="a" style="left:896px;top:100px;width:1px;height:241px;background:#a0a0a0"></div>
<div class="a" style="left:934px;top:100px;width:1px;height:241px;background:#a0a0a0"></div>
<div class="a" style="left:972px;top:100px;width:1px;height:241px;background:#a0a0a0"></div>
<div class="a" style="left:1009px;top:100px;width:1px;height:241px;background:#a0a0a0"></div>
<div class="a" style="left:1046px;top:100px;width:1px;height:241px;background:#a0a0a0"></div>
<div class="a" style="left:809px;top:101px;width:39px;height:23px;background:#3399ff"></div>
<div class="t" style="left:812px;top:106px;color:#fff">0</div>
<div class="t" style="left:852px;top:106px;color:#000">20000</div>
<div class="t" style="left:900px;top:106px;color:#000">36</div>
<div class="t" style="left:938px;top:106px;color:#000">103</div>
<div class="t" style="left:976px;top:106px;color:#000">13</div>
<div class="t" style="left:1013px;top:106px;color:#000">9</div>
<div class="t" style="left:812px;top:130px;color:#000">1</div>
<div class="t" style="left:852px;top:130px;color:#000">15000</div>
<div class="t" style="left:900px;top:130px;color:#000">38</div>
<div class="t" style="left:938px;top:130px;color:#000">94</div>
<div class="t" style="left:976px;top:130px;color:#000">13</div>
<div class="t" style="left:1013px;top:130px;color:#000">11</div>
<div class="t" style="left:812px;top:154px;color:#000">2</div>
<div class="t" style="left:852px;top:154px;color:#000">10000</div>
<div class="t" style="left:900px;top:154px;color:#000">40</div>
<div class="t" style="left:938px;top:154px;color:#000">83</div>
<div class="t" style="left:976px;top:154px;color:#000">14</div>
<div class="t" style="left:1013px;top:154px;color:#000">13</div>
<div class="t" style="left:812px;top:178px;color:#000">3</div>
<div class="t" style="left:852px;top:178px;color:#000">6500</div>
<div class="t" style="left:900px;top:178px;color:#000">42</div>
<div class="t" style="left:938px;top:178px;color:#000">70</div>
<div class="t" style="left:976px;top:178px;color:#000">16</div>
<div class="t" style="left:1013px;top:178px;color:#000">15</div>
<div class="t" style="left:812px;top:202px;color:#000">4</div>
<div class="t" style="left:852px;top:202px;color:#000">5000</div>
<div class="t" style="left:900px;top:202px;color:#000">44</div>
<div class="t" style="left:938px;top:202px;color:#000">55</div>
<div class="t" style="left:976px;top:202px;color:#000">16</div>
<div class="t" style="left:1013px;top:202px;color:#000">8</div>
<div class="t" style="left:812px;top:226px;color:#000">5</div>
<div class="t" style="left:852px;top:226px;color:#000">4000</div>
<div class="t" style="left:900px;top:226px;color:#000">49</div>
<div class="t" style="left:938px;top:226px;color:#000">47</div>
<div class="t" style="left:976px;top:226px;color:#000">23</div>
<div class="t" style="left:1013px;top:226px;color:#000">17</div>
<div class="t" style="left:812px;top:250px;color:#000">6</div>
<div class="t" style="left:852px;top:250px;color:#000">3000</div>
<div class="t" style="left:900px;top:250px;color:#000">72</div>
<div class="t" style="left:938px;top:250px;color:#000">37</div>
<div class="t" style="left:976px;top:250px;color:#000">27</div>
<div class="t" style="left:1013px;top:250px;color:#000">13</div>
<div class="t" style="left:812px;top:274px;color:#000">7</div>
<div class="t" style="left:852px;top:274px;color:#000">2300</div>
<div class="t" style="left:900px;top:274px;color:#000">99</div>
<div class="t" style="left:938px;top:274px;color:#000">34</div>
<div class="t" style="left:976px;top:274px;color:#000">17</div>
<div class="t" style="left:1013px;top:274px;color:#000">12</div>
<div class="t" style="left:812px;top:298px;color:#000">8</div>
<div class="t" style="left:852px;top:298px;color:#000">1500</div>
<div class="t" style="left:900px;top:298px;color:#000">116</div>
<div class="t" style="left:938px;top:298px;color:#000">31</div>
<div class="t" style="left:976px;top:298px;color:#000">14</div>
<div class="t" style="left:1013px;top:298px;color:#000">12</div>
<div class="t" style="left:812px;top:322px;color:#000">9</div>
<div class="t" style="left:852px;top:322px;color:#000">1000</div>
<div class="t" style="left:900px;top:322px;color:#000">130</div>
<div class="t" style="left:938px;top:322px;color:#000">28</div>
<div class="t" style="left:976px;top:322px;color:#000">12</div>
<div class="t" style="left:1013px;top:322px;color:#000">11</div>
<div class="a" style="left:807px;top:369px;width:243px;height:265px;border:1px solid #000;background:#fff"></div>
<div class="a" style="left:808px;top:370px;width:233px;height:22px;background:linear-gradient(#fcfcfc 0px,#fcfcfc 9px,#f2f3f5 9px,#f2f3f5 20px,#d8d8d8 20px,#d8d8d8 21px,#fcfcfc 21px)"></div>
<div class="a" style="left:848px;top:370px;width:1px;height:20px;background:#e1e2e4;box-shadow:-1px 0 0 #fff,1px 0 0 #fff"></div>
<div class="a" style="left:912px;top:370px;width:1px;height:20px;background:#e1e2e4;box-shadow:-1px 0 0 #fff,1px 0 0 #fff"></div>
<div class="a" style="left:976px;top:370px;width:1px;height:20px;background:#e1e2e4;box-shadow:-1px 0 0 #fff,1px 0 0 #fff"></div>
<div class="t" style="left:817px;top:375px">IDX</div>
<div class="t" style="left:857px;top:375px">Count</div>
<div class="t" style="left:921px;top:375px">Rgain</div>
<div class="t" style="left:985px;top:375px">Bgain</div>
<div class="a" style="left:808px;top:392px;width:233px;height:1px;background:#a0a0a0"></div>
<div class="a" style="left:808px;top:416px;width:233px;height:1px;background:#a0a0a0"></div>
<div class="a" style="left:808px;top:440px;width:233px;height:1px;background:#a0a0a0"></div>
<div class="a" style="left:808px;top:464px;width:233px;height:1px;background:#a0a0a0"></div>
<div class="a" style="left:808px;top:488px;width:233px;height:1px;background:#a0a0a0"></div>
<div class="a" style="left:808px;top:512px;width:233px;height:1px;background:#a0a0a0"></div>
<div class="a" style="left:808px;top:536px;width:233px;height:1px;background:#a0a0a0"></div>
<div class="a" style="left:808px;top:560px;width:233px;height:1px;background:#a0a0a0"></div>
<div class="a" style="left:808px;top:584px;width:233px;height:1px;background:#a0a0a0"></div>
<div class="a" style="left:808px;top:608px;width:233px;height:1px;background:#a0a0a0"></div>
<div class="a" style="left:808px;top:632px;width:233px;height:1px;background:#a0a0a0"></div>
<div class="a" style="left:808px;top:392px;width:1px;height:241px;background:#a0a0a0"></div>
<div class="a" style="left:848px;top:392px;width:1px;height:241px;background:#a0a0a0"></div>
<div class="a" style="left:912px;top:392px;width:1px;height:241px;background:#a0a0a0"></div>
<div class="a" style="left:976px;top:392px;width:1px;height:241px;background:#a0a0a0"></div>
<div class="a" style="left:1040px;top:392px;width:1px;height:241px;background:#a0a0a0"></div>
<div class="a" style="left:809px;top:393px;width:39px;height:23px;background:#3399ff"></div>
<div class="t" style="left:812px;top:398px;color:#fff">0</div>
<div class="t" style="left:852px;top:398px;color:#000">0</div>
<div class="t" style="left:916px;top:398px;color:#000">0</div>
<div class="t" style="left:980px;top:398px;color:#000">0</div>
<div class="t" style="left:812px;top:422px;color:#000">1</div>
<div class="t" style="left:852px;top:422px;color:#000">0</div>
<div class="t" style="left:916px;top:422px;color:#000">0</div>
<div class="t" style="left:980px;top:422px;color:#000">0</div>
<div class="t" style="left:812px;top:446px;color:#000">2</div>
<div class="t" style="left:852px;top:446px;color:#000">0</div>
<div class="t" style="left:916px;top:446px;color:#000">0</div>
<div class="t" style="left:980px;top:446px;color:#000">0</div>
<div class="t" style="left:812px;top:470px;color:#000">3</div>
<div class="t" style="left:852px;top:470px;color:#000">0</div>
<div class="t" style="left:916px;top:470px;color:#000">0</div>
<div class="t" style="left:980px;top:470px;color:#000">0</div>
<div class="t" style="left:812px;top:494px;color:#000">4</div>
<div class="t" style="left:852px;top:494px;color:#000">1</div>
<div class="t" style="left:916px;top:494px;color:#000">1740</div>
<div class="t" style="left:980px;top:494px;color:#000">2176</div>
<div class="t" style="left:812px;top:518px;color:#000">5</div>
<div class="t" style="left:852px;top:518px;color:#000">5758</div>
<div class="t" style="left:916px;top:518px;color:#000">1640</div>
<div class="t" style="left:980px;top:518px;color:#000">2536</div>
<div class="t" style="left:812px;top:542px;color:#000">6</div>
<div class="t" style="left:852px;top:542px;color:#000">0</div>
<div class="t" style="left:916px;top:542px;color:#000">0</div>
<div class="t" style="left:980px;top:542px;color:#000">0</div>
<div class="t" style="left:812px;top:566px;color:#000">7</div>
<div class="t" style="left:852px;top:566px;color:#000">0</div>
<div class="t" style="left:916px;top:566px;color:#000">0</div>
<div class="t" style="left:980px;top:566px;color:#000">0</div>
<div class="t" style="left:812px;top:590px;color:#000">8</div>
<div class="t" style="left:852px;top:590px;color:#000">0</div>
<div class="t" style="left:916px;top:590px;color:#000">0</div>
<div class="t" style="left:980px;top:590px;color:#000">0</div>
<div class="t" style="left:812px;top:614px;color:#000">9</div>
<div class="t" style="left:852px;top:614px;color:#000">0</div>
<div class="t" style="left:916px;top:614px;color:#000">0</div>
<div class="t" style="left:980px;top:614px;color:#000">0</div>
</body></html>
